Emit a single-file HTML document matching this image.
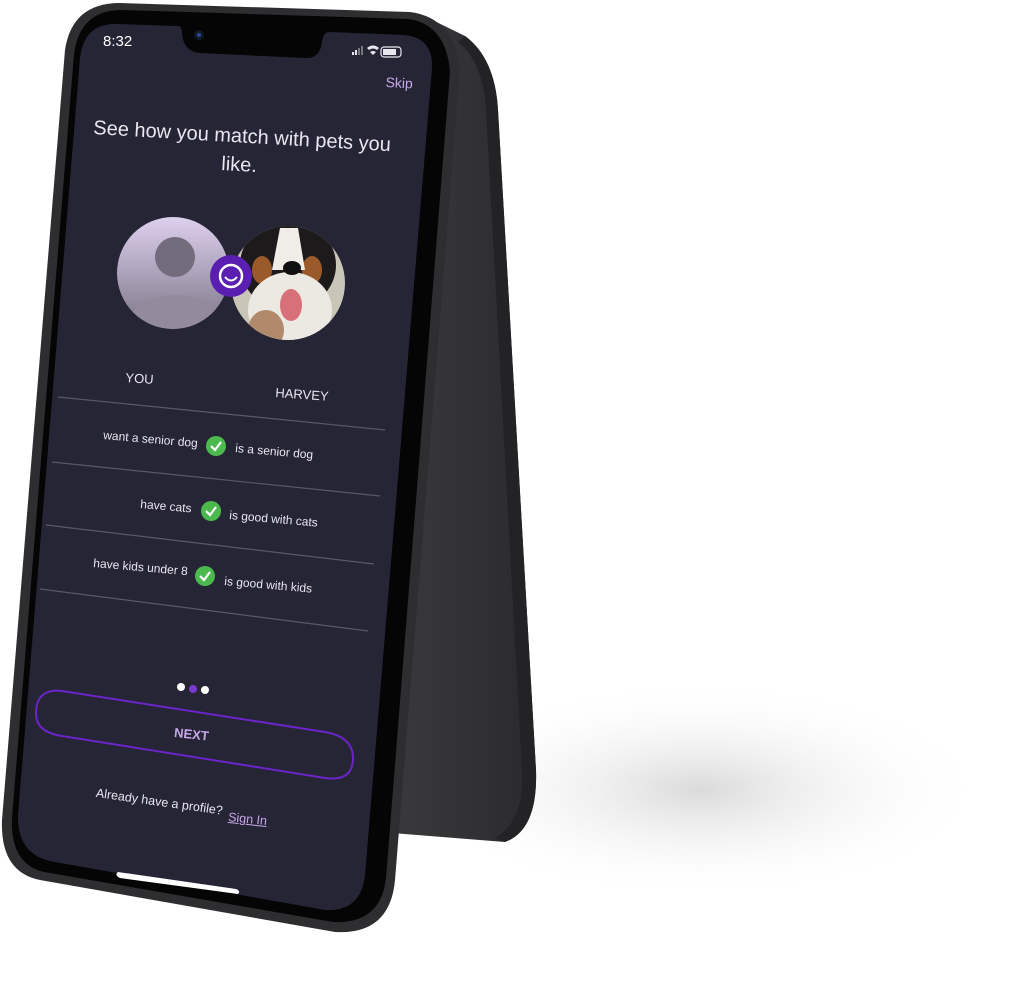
<!DOCTYPE html>
<html><head><meta charset="utf-8"><style>
body{margin:0;width:1009px;height:992px;background:#fff;position:relative;overflow:hidden;font-family:"Liberation Sans",sans-serif}
.t{position:absolute;color:#e8e6ee;white-space:nowrap;transform-origin:0 0}
</style></head><body>
<svg width="1009" height="992" style="position:absolute;left:0;top:0">
<defs>
<radialGradient id="sh" cx="0.5" cy="0.5" r="0.5"><stop offset="0" stop-color="#b5b5b5" stop-opacity=".5"/><stop offset="1" stop-color="#fff" stop-opacity="0"/></radialGradient>
<linearGradient id="av" x1="0" y1="0" x2="0" y2="1"><stop offset="0" stop-color="#ddd0ee"/><stop offset="1" stop-color="#7d7586"/></linearGradient>
<linearGradient id="back" x1="0" y1="0" x2="1" y2="0"><stop offset="0" stop-color="#3a3a3c"/><stop offset=".5" stop-color="#333335"/><stop offset="1" stop-color="#2a2a2c"/></linearGradient>
<clipPath id="c1"><circle cx="173" cy="273" r="56"/></clipPath>
<clipPath id="c2"><circle cx="288" cy="283" r="57"/></clipPath>
</defs>
<ellipse cx="700" cy="790" rx="290" ry="110" fill="url(#sh)"/>
<path d="M420,14 L465,36 Q495,58 498,110 L536,770 Q538,830 505,842 L380,832 L440,60 Z" fill="url(#back)"/>
<path d="M465,36 Q495,58 498,110 L536,770 Q538,830 505,842 L495,838 Q525,820 522,770 L486,110 Q483,62 458,42Z" fill="#232325"/>
<path d="M120,3 L410,12 Q455,18 460,70 L395,880 Q390,935 335,932 L40,880 Q0,872 2,820 L65,50 Q72,3 120,3 Z" fill="#2e2e30"/>
<path d="M122,10 L408,19 Q446,24 450,72 L386,878 Q381,924 333,922 L44,872 Q10,864 12,818 L74,54 Q80,10 122,10 Z" fill="#050505"/>
<path d="M115,24 L178,26 Q182,26 182,34 Q184,52 200,53 L305,58 Q320,59 322,42 Q323,32 330,32 L405,35 Q433,38 432,68 L365,875 Q361,912 325,910 L55,862 Q17,856 18,815 L80,58 Q84,24 115,24 Z" fill="#262536"/>
<circle cx="199" cy="35" r="5" fill="#111826"/><circle cx="199" cy="35" r="2" fill="#2a45a0"/>
<g stroke="#5a5868" stroke-width="1.2">
<line x1="58" y1="397" x2="385" y2="430"/>
<line x1="52" y1="462" x2="380" y2="496"/>
<line x1="46" y1="525" x2="374" y2="564"/>
<line x1="40" y1="589" x2="368" y2="631"/>
</g>
<circle cx="173" cy="273" r="56" fill="url(#av)"/>
<g clip-path="url(#c1)"><circle cx="175" cy="257" r="20" fill="#736c7d"/><ellipse cx="175" cy="320" rx="45" ry="25" fill="#938b9c"/></g>
<g clip-path="url(#c2)">
<rect x="230" y="225" width="120" height="120" fill="#c9c6b8"/>
<ellipse cx="288" cy="265" rx="48" ry="45" fill="#1c1a1a"/>
<ellipse cx="262" cy="270" rx="10" ry="14" fill="#9a5a2a"/><ellipse cx="312" cy="270" rx="10" ry="14" fill="#9a5a2a"/>
<path d="M280,228 L298,228 L305,270 L272,270Z" fill="#f0ede8"/>
<ellipse cx="290" cy="310" rx="42" ry="38" fill="#ece8e2"/>
<ellipse cx="266" cy="330" rx="18" ry="20" fill="#b08a6a"/>
<ellipse cx="292" cy="268" rx="9" ry="7" fill="#111"/>
<ellipse cx="291" cy="305" rx="11" ry="16" fill="#d8707a"/>
</g>
<circle cx="231" cy="276" r="21" fill="#5a1fb0"/>
<circle cx="231" cy="276" r="11" fill="none" stroke="#fff" stroke-width="2.5"/>
<path d="M225,277 Q231,284 237,277" fill="none" stroke="#fff" stroke-width="2"/>
<ellipse cx="181" cy="687" rx="4" ry="4" fill="#fff"/><ellipse cx="193" cy="689" rx="4" ry="4" fill="#7a3ad0"/><ellipse cx="205" cy="690" rx="4" ry="4" fill="#fff"/>
<path d="M62,691 L325,732 Q353,737 353,758 Q353,782 325,778 L62,736 Q35,732 36,712 Q37,688 62,691Z" fill="none" stroke="#6a24c8" stroke-width="2"/>
<path d="M118,872 L236,889 Q241,891 238,894 L120,878 Q114,875 118,872Z" fill="#fff"/>
<g fill="#e8e6ee"><rect x="352" y="52" width="2" height="3"/><rect x="355" y="50" width="2" height="5"/><rect x="358" y="48" width="2" height="7" fill="#777"/><rect x="361" y="46" width="2" height="9" fill="#777"/>
<rect x="381" y="47" width="20" height="10" rx="3" fill="none" stroke="#e8e6ee" stroke-width="1.2"/><rect x="383" y="49" width="13" height="6"/>
<path d="M367,48 Q373,43 379,48 L377,50 Q373,47 369,50Z M373,55 L370,52 Q373,50 376,52Z"/></g>
<g transform="translate(216,446)"><circle r="10" fill="#4cb94e"/><path d="M-5,0 L-1,4 L5,-4" stroke="#fff" stroke-width="2.2" fill="none"/></g>
<g transform="translate(211,511)"><circle r="10" fill="#4cb94e"/><path d="M-5,0 L-1,4 L5,-4" stroke="#fff" stroke-width="2.2" fill="none"/></g>
<g transform="translate(205,576)"><circle r="10" fill="#4cb94e"/><path d="M-5,0 L-1,4 L5,-4" stroke="#fff" stroke-width="2.2" fill="none"/></g>
</svg>
<div class="t" style="left:103px;top:33px;font-size:15px;color:#fff">8:32</div>
<div class="t" style="left:386px;top:74px;font-size:14px;color:#c8a8e8;transform:rotate(3deg)">Skip</div>
<div class="t" style="left:94px;top:117px;font-size:20px;transform:rotate(3.3deg)">See how you match with pets you</div>
<div class="t" style="left:222px;top:153px;font-size:20px;transform:rotate(3.3deg)">like.</div>
<div class="t" style="left:126px;top:370px;font-size:13px;transform:rotate(4deg)">YOU</div>
<div class="t" style="left:276px;top:385px;font-size:13px;transform:rotate(4deg)">HARVEY</div>
<div class="t" style="left:104px;top:428px;font-size:12px;transform:rotate(5deg)">want a senior dog</div>
<div class="t" style="left:236px;top:441px;font-size:12px;transform:rotate(5deg)">is a senior dog</div>
<div class="t" style="left:141px;top:497px;font-size:12px;transform:rotate(5deg)">have cats</div>
<div class="t" style="left:230px;top:508px;font-size:12px;transform:rotate(5deg)">is good with cats</div>
<div class="t" style="left:94px;top:556px;font-size:12px;transform:rotate(5deg)">have kids under 8</div>
<div class="t" style="left:225px;top:574px;font-size:12px;transform:rotate(5deg)">is good with kids</div>
<div class="t" style="left:175px;top:725px;font-size:13px;font-weight:bold;color:#c8a8e8;transform:rotate(6deg)">NEXT</div>
<div class="t" style="left:97px;top:786px;font-size:12.5px;transform:rotate(8deg)">Already have a profile?</div>
<div class="t" style="left:229px;top:810px;font-size:12.5px;color:#c8a8e8;text-decoration:underline;transform:rotate(6deg)">Sign In</div>
</body></html>
